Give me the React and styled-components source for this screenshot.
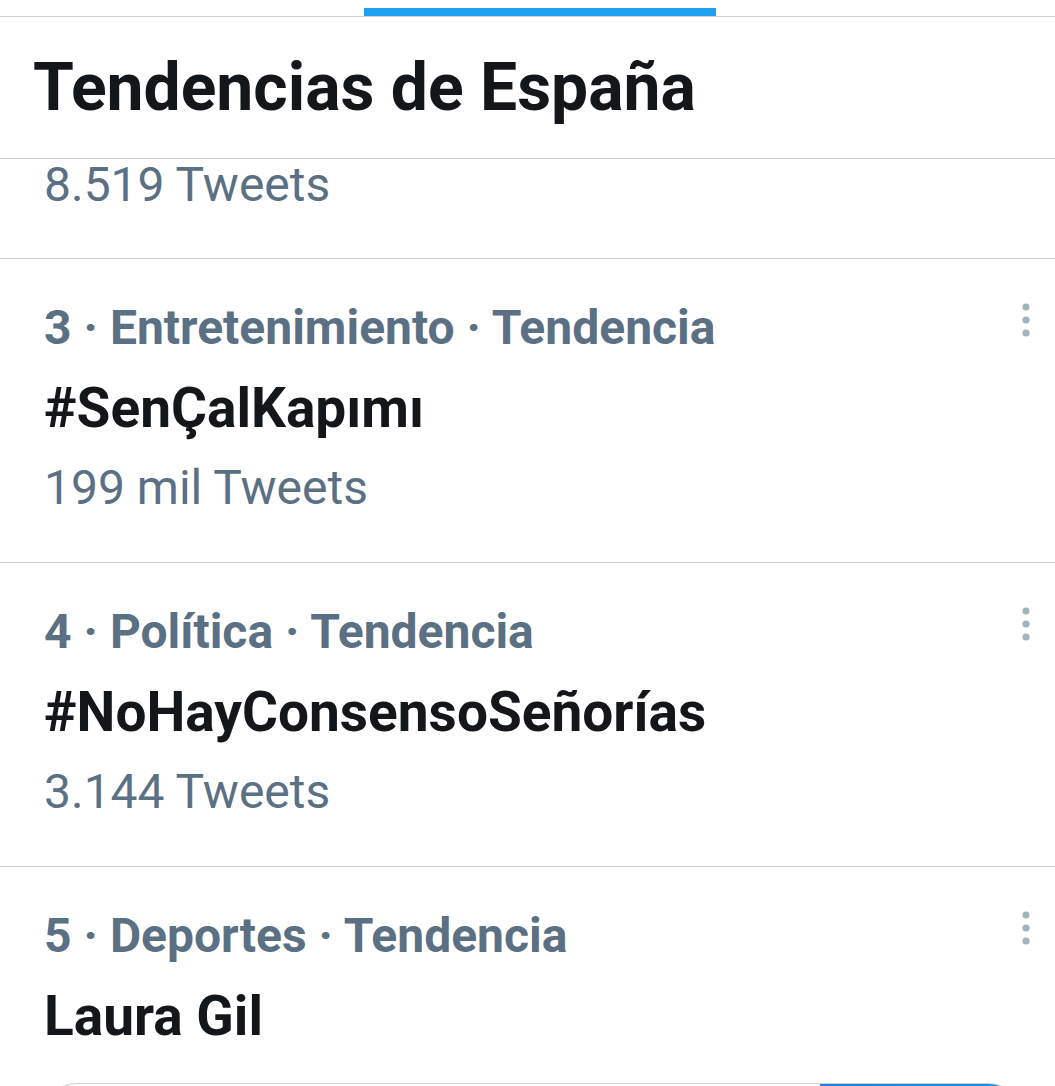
import React from 'react'
import styled, { createGlobalStyle } from 'styled-components'

const GlobalStyle = createGlobalStyle`
    body {
        margin: 0;
        background: #fff;
        font-family: Roboto, "Noto Sans", sans-serif;
        overflow: hidden;
    }
`

const trends = [
    { rank: 3, category: 'Entretenimiento', name: '#SenÇalKapımı', count: '199 mil Tweets' },
    { rank: 4, category: 'Política', name: '#NoHayConsensoSeñorías', count: '3.144 Tweets' },
    { rank: 5, category: 'Deportes', name: 'Laura Gil', card: true },
]

function MoreIcon() {
    return (
        <svg width="14" height="34" viewBox="0 0 14 34">
            <circle cx="7" cy="4" r="3.6" fill="#a3b1bc" />
            <circle cx="7" cy="17" r="3.6" fill="#a3b1bc" />
            <circle cx="7" cy="30" r="3.6" fill="#a3b1bc" />
        </svg>
    )
}

function TrendRow({ trend }) {
    return (
        <Row>
            <Body>
                <Meta>{trend.rank} · {trend.category} · Tendencia</Meta>
                <Name>{trend.name}</Name>
                {trend.count && <Count>{trend.count}</Count>}
                {trend.card && (
                    <Card>
                        <CardAction />
                    </Card>
                )}
            </Body>
            <More aria-label="Más opciones">
                <MoreIcon />
            </More>
        </Row>
    )
}

export default function App() {
    return (
        <Page>
            <GlobalStyle />
            <Header>
                <TabStrip>
                    <span />
                    <Indicator />
                    <span />
                </TabStrip>
                <Title>Tendencias de España</Title>
            </Header>
            {/* previous trend, scrolled mostly under the header */}
            <ClippedRow>
                <Count $compact>8.519 Tweets</Count>
            </ClippedRow>
            {trends.map(t => (
                <TrendRow key={t.rank} trend={t} />
            ))}
        </Page>
    )
}

const Page = styled.div`
    width: 1055px;
    height: 1086px;
    overflow: hidden;
    background: #fff;
`

const Header = styled.header`
    border-bottom: 1px solid #ccd1d5;
`

const TabStrip = styled.div`
    display: grid;
    grid-template-columns: 364px 352px 1fr;
    align-items: end;
    height: 16px;
    border-bottom: 1px solid #ccd1d5;
`

const Indicator = styled.div`
    height: 8px;
    background: #1da1f2;
`

const Title = styled.h1`
    margin: 0;
    padding: 1px 0 0 33px;
    height: 140px;
    font-size: 66px;
    line-height: 140px;
    font-weight: 700;
    color: #14171a;
`

const ClippedRow = styled.div`
    height: 99px;
    padding-left: 44px;
    border-bottom: 1px solid #ccd1d5;
`

const Row = styled.div`
    display: flex;
    align-items: flex-start;
    padding: 29px 22px 34px 44px;
    border-bottom: 1px solid #ccd1d5;
`

const Body = styled.div`
    flex: 1;
    min-width: 0;
`

const Meta = styled.div`
    font-size: 48px;
    line-height: 80px;
    font-weight: 700;
    color: #5b7083;
`

const Name = styled.div`
    font-size: 55px;
    line-height: 80px;
    font-weight: 700;
    color: #14171a;
`

const Count = styled.div`
    font-size: 48px;
    line-height: ${p => (p.$compact ? '52px' : '80px')};
    font-weight: 400;
    color: #5b7083;
`

const More = styled.div`
    width: 14px;
    margin-top: 15px;
    line-height: 0;
`

const Card = styled.div`
    display: flex;
    justify-content: flex-end;
    margin-top: 27px;
    margin-right: -2px;
    height: 200px;
    border: 1px solid #ccd1d5;
    border-radius: 32px;
    overflow: hidden;
`

const CardAction = styled.div`
    width: 200px;
    background: linear-gradient(90deg, #1c7fd6, #1d90e8);
`
